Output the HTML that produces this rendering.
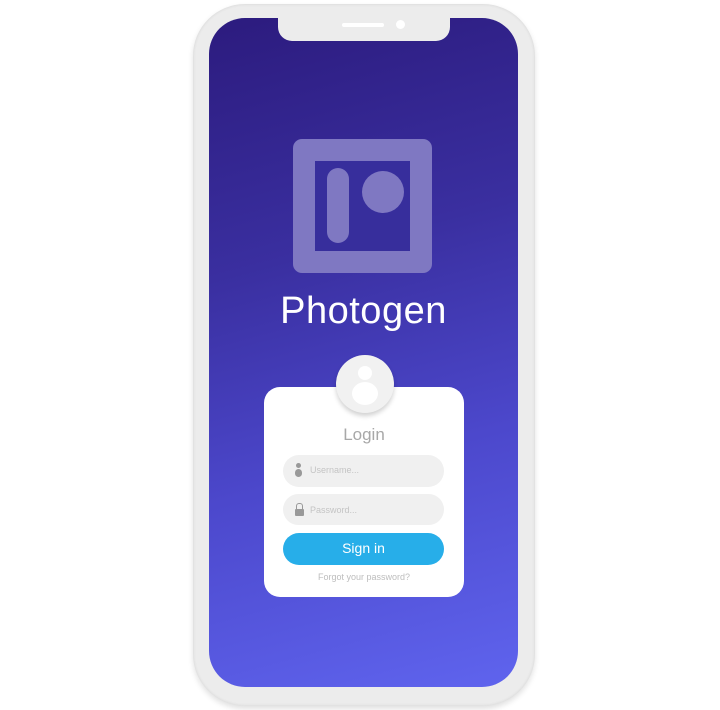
<!DOCTYPE html>
<html><head><style>
body{margin:0;width:720px;height:710px;background:#fff;position:relative;overflow:hidden;font-family:"Liberation Sans","DejaVu Sans",sans-serif}
.frame{position:absolute;left:193px;top:4px;width:342px;height:702px;border-radius:52px;background:#ececec;box-shadow:0 3px 6px rgba(0,0,0,.12), inset 0 0 3px rgba(0,0,0,.1)}
.screen{position:absolute;left:209px;top:18px;width:309px;height:669px;border-radius:36px;background:linear-gradient(165deg,#2c1b7e 0%,#3a2fa0 35%,#4c48cc 65%,#5f64ee 100%);overflow:hidden}
.notch{position:absolute;left:278px;top:10px;width:172px;height:31px;background:#ececec;border-radius:0 0 14px 14px}
.spk{position:absolute;left:342px;top:23px;width:42px;height:4px;border-radius:2px;background:#fff}
.cam{position:absolute;left:396px;top:20px;width:9px;height:9px;border-radius:50%;background:#fff}
.a{position:absolute}
</style></head><body>
<div class="frame"></div>
<div class="screen"></div>
<div class="notch"></div><div class="spk"></div><div class="cam"></div>
<div class="a" style="left:293px;top:139px;width:139px;height:134px;background:#7f78c2;border-radius:9px"></div>
<div class="a" style="left:315px;top:161px;width:95px;height:90px;background:#372e9c"></div>
<div class="a" style="left:327px;top:168px;width:22px;height:75px;background:#7f78c2;border-radius:11px"></div>
<div class="a" style="left:362px;top:171px;width:42px;height:42px;background:#7f78c2;border-radius:50%"></div>
<div class="a" style="left:209px;top:290px;width:309px;text-align:center;color:#fff;font-size:38px;letter-spacing:.5px">Photogen</div>
<div class="a" style="left:264px;top:387px;width:200px;height:210px;background:#fff;border-radius:16px"></div>
<div class="a" style="left:336px;top:355px;width:58px;height:58px;background:#f1f1f1;border-radius:50%;box-shadow:0 3px 5px rgba(0,0,0,.18)"></div>
<div class="a" style="left:358px;top:366px;width:14px;height:14px;background:#fff;border-radius:50%"></div>
<div class="a" style="left:352px;top:382px;width:26px;height:23px;background:#fff;border-radius:50%"></div>
<div class="a" style="left:264px;top:425px;width:200px;text-align:center;color:#a8a8a8;font-size:17px">Login</div>
<div class="a" style="left:283px;top:455px;width:161px;height:32px;background:#f0f0f0;border-radius:16px"></div>
<div class="a" style="left:296px;top:463px;width:5px;height:5px;background:#999;border-radius:50%"></div>
<div class="a" style="left:295px;top:469px;width:7px;height:8px;background:#999;border-radius:4px"></div>
<div class="a" style="left:310px;top:465px;color:#c4c4c4;font-size:9px">Username...</div>
<div class="a" style="left:283px;top:494px;width:161px;height:31px;background:#f0f0f0;border-radius:16px"></div>
<div class="a" style="left:296px;top:503px;width:5px;height:6px;border:1.5px solid #999;border-bottom:none;border-radius:3px 3px 0 0"></div>
<div class="a" style="left:295px;top:509px;width:9px;height:7px;background:#999;border-radius:1px"></div>
<div class="a" style="left:310px;top:505px;color:#c4c4c4;font-size:9px">Password...</div>
<div class="a" style="left:283px;top:533px;width:161px;height:32px;background:#27aee9;border-radius:16px;color:#fff;font-size:14px;text-align:center;line-height:31px">Sign in</div>
<div class="a" style="left:264px;top:572px;width:200px;text-align:center;color:#bdbdbd;font-size:9px">Forgot your password?</div>
</body></html>
